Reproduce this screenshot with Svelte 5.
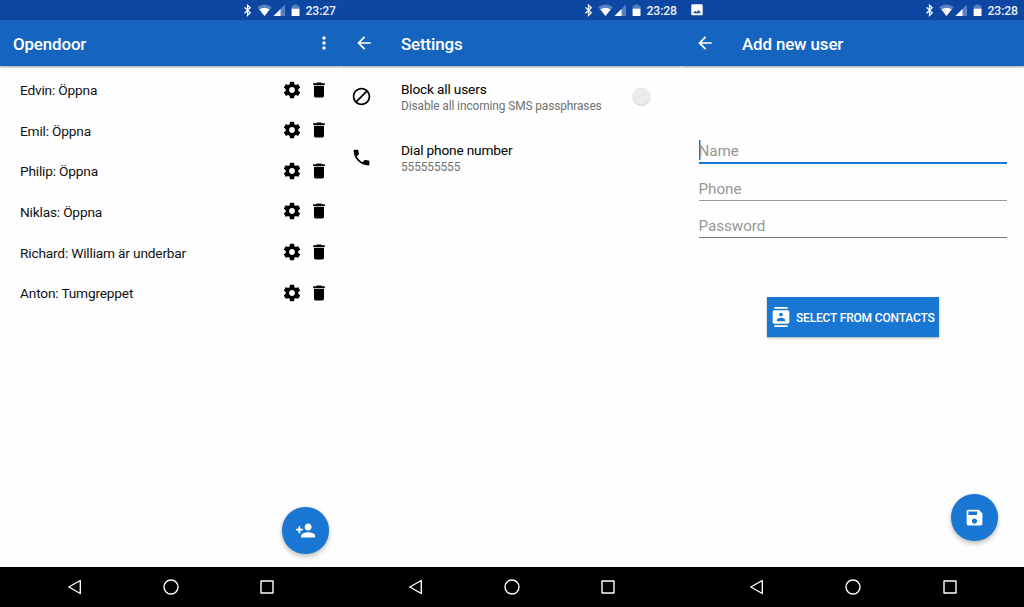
<script>
  const users = [
    'Edvin: Öppna',
    'Emil: Öppna',
    'Philip: Öppna',
    'Niklas: Öppna',
    'Richard: William är underbar',
    'Anton: Tumgreppet'
  ];
  const icons = {
    gear: 'M19.43 12.98c.04-.32.07-.64.07-.98s-.03-.66-.07-.98l2.11-1.65c.19-.15.24-.42.12-.64l-2-3.46c-.12-.22-.39-.3-.61-.22l-2.49 1c-.52-.4-1.08-.73-1.69-.98l-.38-2.65C14.46 2.18 14.25 2 14 2h-4c-.25 0-.46.18-.49.42l-.38 2.65c-.61.25-1.17.59-1.69.98l-2.49-1c-.23-.09-.49 0-.61.22l-2 3.46c-.13.22-.07.49.12.64l2.11 1.65c-.04.32-.07.65-.07.98s.03.66.07.98l-2.11 1.65c-.19.15-.24.42-.12.64l2 3.46c.12.22.39.3.61.22l2.49-1c.52.4 1.08.73 1.69.98l.38 2.65c.03.24.24.42.49.42h4c.25 0 .46-.18.49-.42l.38-2.65c.61-.25 1.17-.59 1.69-.98l2.49 1c.23.09.49 0 .61-.22l2-3.46c.12-.22.07-.49-.12-.64l-2.11-1.65zM12 15.5c-1.93 0-3.5-1.57-3.5-3.5s1.57-3.5 3.5-3.5 3.5 1.57 3.5 3.5-1.57 3.5-3.5 3.5z',
    trash: 'M6 19c0 1.1.9 2 2 2h8c1.1 0 2-.9 2-2V7H6v12zM19 4h-3.5l-1-1h-5l-1 1H5v2h14V4z',
    more: 'M12 8c1.1 0 2-.9 2-2s-.9-2-2-2-2 .9-2 2 .9 2 2 2zm0 2c-1.1 0-2 .9-2 2s.9 2 2 2 2-.9 2-2-.9-2-2-2zm0 6c-1.1 0-2 .9-2 2s.9 2 2 2 2-.9 2-2-.9-2-2-2z',
    back: 'M20 11H7.83l5.59-5.59L12 4l-8 8 8 8 1.41-1.41L7.83 13H20v-2z',
    block: 'M12 2C6.48 2 2 6.48 2 12s4.48 10 10 10 10-4.48 10-10S17.52 2 12 2zM4 12c0-4.42 3.58-8 8-8 1.85 0 3.55.63 4.9 1.69L5.69 16.9C4.63 15.55 4 13.85 4 12zm8 8c-1.85 0-3.55-.63-4.9-1.69L18.31 7.1C19.37 8.45 20 10.15 20 12c0 4.42-3.58 8-8 8z',
    call: 'M6.62 10.79c1.44 2.83 3.76 5.14 6.59 6.59l2.2-2.2c.27-.27.67-.36 1.02-.24 1.12.37 2.33.57 3.57.57.55 0 1 .45 1 1V20c0 .55-.45 1-1 1-9.39 0-17-7.61-17-17 0-.55.45-1 1-1h3.5c.55 0 1 .45 1 1 0 1.25.2 2.45.57 3.57.11.35.03.74-.25 1.02l-2.2 2.2z',
    contacts: 'M20 0H4v2h16V0zM4 24h16v-2H4v2zM20 4H4c-1.1 0-2 .9-2 2v12c0 1.1.9 2 2 2h16c1.1 0 2-.9 2-2V6c0-1.1-.9-2-2-2zm-8 2.75c1.24 0 2.25 1.01 2.25 2.25s-1.01 2.25-2.25 2.25S9.75 10.24 9.75 9 10.76 6.75 12 6.75zM17 17H7v-1.5c0-1.67 3.33-2.5 5-2.5s5 .83 5 2.5V17z',
    addUser: 'M15 12c2.21 0 4-1.79 4-4s-1.79-4-4-4-4 1.79-4 4 1.79 4 4 4zm-9-2V7H4v3H1v2h3v3h2v-3h3v-2H6zm9 4c-2.67 0-8 1.34-8 4v2h16v-2c0-2.66-5.33-4-8-4z',
    save: 'M17 3H5c-1.11 0-2 .9-2 2v14c0 1.1.89 2 2 2h14c1.1 0 2-.9 2-2V7l-4-4zm-5 16c-1.66 0-3-1.34-3-3s1.34-3 3-3 3 1.34 3 3-1.34 3-3 3zm3-10H5V5h10v4z'
  };
</script>

{#snippet icon(name)}
  <svg class="icon" viewBox="0 0 24 24" aria-hidden="true"><path d={icons[name]} /></svg>
{/snippet}

{#snippet statusBar(time, picture)}
  <div class="status">
    {#if picture}
      <svg class="picture" width="12" height="12" viewBox="0 0 12 12"><path fill-rule="evenodd" d="M1.5 .3h9q1.2 0 1.2 1.2v8.6q0 1.2-1.2 1.2h-9Q.3 11.300 .3 10.100V1.500Q.3 .3 1.500 .3zM2 9.300h8L7.500 5.900 5.600 8.200 4.300 6.700z" /></svg>
    {/if}
    <svg class="signals" width="58" height="14" viewBox="0 0 58 14">
      <path d="M1.500 4.400 7.200 9.800 4.500 12.500V2.200L7.200 4.800 1.500 10.200" fill="none" stroke="#fff" stroke-width="1.250" />
      <path class="faint" d="M14.200 4.100Q21.500 -.9 28.800 4.100L21.500 13z" />
      <path d="M16.400 6.600Q21.500 3 26.600 6.600L21.500 13z" />
      <path class="faint" d="M42 1.500V13H30.500z" />
      <path d="M37.500 6V13H30.500z" />
      <path class="faint" d="M48.600 2.700h2.100V1.500h3.700v1.200h2.100v3.300h-7.900z" />
      <path d="M48.600 5.700h7.900v7.300h-7.900z" />
    </svg>
    <span class="time">{time}</span>
  </div>
{/snippet}

{#snippet navBar()}
  <footer>
    <svg width="16" height="18" viewBox="0 0 16 18"><path d="M14.300 2.500V15.500L2.800 9z" /></svg>
    <svg width="18" height="18" viewBox="0 0 18 18"><circle cx="9" cy="9" r="7" /></svg>
    <svg width="16" height="18" viewBox="0 0 16 18"><path d="M2 3h12v12H2z" /></svg>
  </footer>
{/snippet}

<div class="screens">
  <section>
    {@render statusBar('23:27', false)}
    <header class="home"><h1>Opendoor</h1><button class="more" aria-label="More">{@render icon('more')}</button></header>
    <main>
      <ul>
        {#each users as user}
          <li><span>{user}</span>{@render icon('gear')}{@render icon('trash')}</li>
        {/each}
      </ul>
      <button class="fab" aria-label="Add user">{@render icon('addUser')}</button>
    </main>
    {@render navBar()}
  </section>

  <section>
    {@render statusBar('23:28', false)}
    <header><button aria-label="Back">{@render icon('back')}</button><h1>Settings</h1></header>
    <main class="settings">
      <div class="pref">
        {@render icon('block')}
        <div class="label"><b>Block all users</b><small>Disable all incoming SMS passphrases</small></div>
        <i class="knob"></i>
      </div>
      <div class="pref">
        {@render icon('call')}
        <div class="label"><b>Dial phone number</b><small>555555555</small></div>
      </div>
    </main>
    {@render navBar()}
  </section>

  <section>
    {@render statusBar('23:28', true)}
    <header><button aria-label="Back">{@render icon('back')}</button><h1>Add new user</h1></header>
    <main class="form">
      <div class="field active">Name</div>
      <div class="field mid">Phone</div>
      <div class="field">Password</div>
      <button class="select">{@render icon('contacts')}<span>SELECT FROM CONTACTS</span></button>
      <button class="fab high" aria-label="Save">{@render icon('save')}</button>
    </main>
    {@render navBar()}
  </section>
</div>

<style>
  :global(body) { margin: 0; background: #fff; }
  .screens {
    display: grid;
    grid-template-columns: 341px 341px 342px;
    width: 1024px;
    height: 607px;
    overflow: hidden;
    font-family: Roboto, sans-serif;
    color: #111;
  }
  section { display: flex; flex-direction: column; background: #fefefe; min-width: 0; }
  button { border: 0; padding: 0; margin: 0; background: none; color: inherit; font: inherit; display: flex; }
  .icon { width: 20px; height: 20px; fill: currentColor; flex: none; display: block; }

  .status {
    height: 20px; flex: none; box-sizing: border-box;
    display: flex; align-items: center; justify-content: flex-end;
    background: #0d47a1; color: #fff; padding-right: 5px;
  }
  section:last-child .status { padding-right: 6px; }
  .status svg { fill: #fff; }
  .status .faint { fill: #5681c4; }
  .picture { margin: 0 auto 0 9px; }
  .signals { margin-right: 4.500px; }
  .time { width: 30.500px; font-size: 12.200px; letter-spacing: -.1px; font-weight: 500; line-height: 20px; padding-top: 1px; color: #e9eef7; white-space: nowrap; }

  header {
    height: 46px; flex: none; box-sizing: border-box;
    display: flex; align-items: center; padding: 0 7.500px 0 13px;
    background: linear-gradient(#125bb5, #1565c0 1.500px); color: #fff;
    box-shadow: 0 1px 2px rgba(0, 0, 0, .4);
    clip-path: inset(0 0 -4px 0);
  }
  h1 { margin: 2px 0 0; font-size: 16.900px; letter-spacing: -.13px; font-weight: 500; line-height: 22px; }
  header h1 { margin-left: 27px; }
  .home h1 { margin-left: 0; margin-right: auto; }

  main { flex: 1; display: flex; flex-direction: column; position: relative; min-height: 0; }
  ul { list-style: none; margin: 0; padding: 3.300px 12px 0 20px; }
  li { display: flex; align-items: center; height: 40.600px; font-size: 13.700px; letter-spacing: -.18px; }
  li span { flex: 1; padding-top: 1.200px; }
  li .icon + .icon { margin-left: 7px; }
  li .icon { color: #000; }

  .settings { padding-left: 10px; }
  .pref { display: flex; align-items: center; height: 61px; color: #000; }
  .pref .icon { width: 21px; height: 21px; }
  .label { width: 232px; margin: 1px 0 0 29px; display: flex; flex-direction: column; }
  .label b { font-size: 13.700px; letter-spacing: -.18px; font-weight: 400; line-height: 17px; }
  .label small { font-size: 11.900px; letter-spacing: -.1px; line-height: 16px; color: #717171; }
  .knob { width: 17px; height: 17px; border-radius: 50%; background: #ececec; box-shadow: 0 .5px 1.500px rgba(0, 0, 0, .3); }

  .form { padding: 72px 17px 0 16.500px; }
  .field {
    box-sizing: border-box; height: 26px; margin-bottom: 11px; padding-top: 4px;
    font-size: 15.200px; letter-spacing: -.03px; line-height: 20px; color: #979797;
    border-bottom: 1px solid #777;
  }
  .field.active { padding-top: 3px; border-bottom: 2px solid #1976d2; background: linear-gradient(#1976d2, #1976d2) 0 2px / 1.500px 20px no-repeat; }
  .field.mid { border-bottom: 1px solid #999; }
  .select {
    width: 172px; height: 40px; margin: 48px 0 0 68.500px; box-sizing: border-box; padding-left: 4px;
    align-items: center; gap: 5px; background: #1976d2; color: #fff;
    font-size: 12px; letter-spacing: -.18px; font-weight: 500; white-space: nowrap;
    box-shadow: 0 1px 2px rgba(0, 0, 0, .35);
  }
  .select span { padding-top: 1px; }
  .fab {
    position: absolute; right: 12.500px; bottom: 13.500px; width: 46.500px; height: 46.500px;
    border-radius: 50%; align-items: center; justify-content: center;
    background: #1976d2; color: #fff;
    box-shadow: 0 3px 5px rgba(0, 0, 0, .22), 0 0 3px rgba(0, 0, 0, .12);
  }
  .fab .icon { width: 21px; height: 21px; }
  .fab.high { right: 26.500px; bottom: 26.500px; }

  footer {
    height: 40px; flex: none; box-sizing: border-box;
    display: flex; align-items: center; justify-content: space-between;
    padding: 0 66px; background: #000;
  }
  footer svg { fill: none; stroke: #fff; stroke-width: 1.400; stroke-linejoin: round; }
</style>
